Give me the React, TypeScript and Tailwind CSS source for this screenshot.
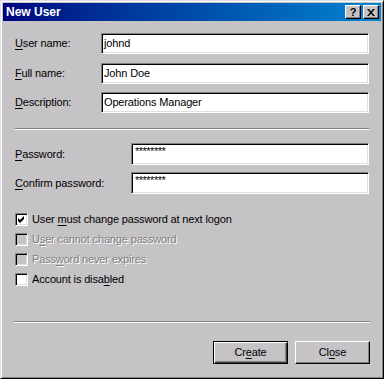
import { ReactNode } from 'react';

const font = "font-['Liberation_Sans',Arial,sans-serif]";
const sunken =
  'border border-t-[#808080] border-l-[#808080] border-b-white border-r-white shadow-[inset_1px_1px_0_#000,inset_-1px_-1px_0_#dfdfdf]';

function Key({ text, at }: { text: string; at: number }) {
  return (
    <>
      {text.slice(0, at)}
      <span className="underline underline-offset-[2px]">{text[at]}</span>
      {text.slice(at + 1)}
    </>
  );
}

function Field({ label, value, labelWidth }: { label: ReactNode; value: string; labelWidth: string }) {
  return (
    <div className="flex items-center">
      <div className={`${labelWidth} shrink-0`}>{label}</div>
      <div className={`flex-1 h-[21px] bg-white ${sunken} flex items-center pl-[2px]`}>{value}</div>
    </div>
  );
}

function PasswordField({ label }: { label: ReactNode }) {
  return (
    <div className="flex items-center">
      <div className="w-[116px] shrink-0">{label}</div>
      <div className={`flex-1 h-[22px] bg-white ${sunken} pl-[3px] pt-[1px] leading-[12px] tracking-[-0.5px]`}>********</div>
    </div>
  );
}

function Check({ label, checked, disabled }: { label: ReactNode; checked?: boolean; disabled?: boolean }) {
  return (
    <div className="flex items-center h-[20px] gap-[4px]">
      <div className={`w-[13px] h-[13px] ${sunken} ${disabled ? 'bg-[#c6c3c6]' : 'bg-white'} flex items-center justify-center`}>
        {checked && (
          <svg width="7" height="7" viewBox="0 0 7 7">
            <path d="M0 2 L2 4 L6 0 L6 3 L2 7 L0 5 Z" fill="#000" />
          </svg>
        )}
      </div>
      <span className={disabled ? 'text-[#808080] [text-shadow:1px_1px_0_#fff]' : ''}>{label}</span>
    </div>
  );
}

function Separator({ className }: { className: string }) {
  return <div className={`h-[2px] border-t border-t-[#808080] border-b border-b-white ${className}`} />;
}

export default function App() {
  return (
    <div
      className={`${font} w-[384px] h-[379px] bg-[#c6c3c6] text-[11px] tracking-[-0.15px] text-black flex flex-col border border-t-[#dfdfdf] border-l-[#dfdfdf] border-b-black border-r-black shadow-[inset_1px_1px_0_#fff,inset_-1px_-1px_0_#808080] p-[2px]`}
    >
      <div className="h-[18px] bg-linear-to-r from-[#000080] to-[#1084d0] flex items-center pl-[3px] pr-[2px]">
        <span className="text-white font-bold text-[12px] tracking-normal flex-1">New User</span>
        <div className="flex gap-[2px]">
          <div className="w-[16px] h-[14px] bg-[#c6c3c6] border border-t-white border-l-white border-b-black border-r-black shadow-[inset_-1px_-1px_0_#808080] flex items-center justify-center font-bold text-[11px] leading-none">
            ?
          </div>
          <div className="w-[16px] h-[14px] bg-[#c6c3c6] border border-t-white border-l-white border-b-black border-r-black shadow-[inset_-1px_-1px_0_#808080] flex items-center justify-center">
            <svg width="8" height="7" viewBox="0 0 8 7">
              <path d="M0 0h2l2 2.5L6 0h2L5 3.5 8 7H6L4 4.5 2 7H0l3-3.5z" fill="#000" />
            </svg>
          </div>
        </div>
      </div>

      <div className="flex flex-col px-[12px]">
        <div className="mt-[12px]">
          <Field label={<Key text="User name:" at={0} />} value="johnd" labelWidth="w-[86px]" />
        </div>
        <div className="mt-[9px]">
          <Field label={<Key text="Full name:" at={0} />} value="John Doe" labelWidth="w-[86px]" />
        </div>
        <div className="mt-[8px]">
          <Field label={<Key text="Description:" at={0} />} value="Operations Manager" labelWidth="w-[86px]" />
        </div>

        <Separator className="mt-[15px]" />

        <div className="mt-[13px]">
          <PasswordField label={<Key text="Password:" at={0} />} />
        </div>
        <div className="mt-[7px]">
          <PasswordField label={<Key text="Confirm password:" at={0} />} />
        </div>

        <div className="mt-[15px] flex flex-col">
          <Check label={<Key text="User must change password at next logon" at={5} />} checked />
          <Check label={<Key text="User cannot change password" at={1} />} disabled />
          <Check label={<Key text="Password never expires" at={4} />} disabled />
          <Check label={<Key text="Account is disabled" at={15} />} />
        </div>

        <Separator className="mt-[32px] -mx-[1px]" />

        <div className="mt-[18px] flex justify-end gap-[7px] -mr-[1px]">
          <button className="w-[75px] h-[23px] bg-[#c6c3c6] border border-black shadow-[inset_1px_1px_0_#fff,inset_-1px_-1px_0_#404040,inset_-2px_-2px_0_#808080] flex items-center justify-center">
            <Key text="Create" at={2} />
          </button>
          <button className="w-[75px] h-[23px] bg-[#c6c3c6] border border-t-white border-l-white border-b-black border-r-black shadow-[inset_-1px_-1px_0_#808080] flex items-center justify-center">
            <Key text="Close" at={2} />
          </button>
        </div>
      </div>
    </div>
  );
}
